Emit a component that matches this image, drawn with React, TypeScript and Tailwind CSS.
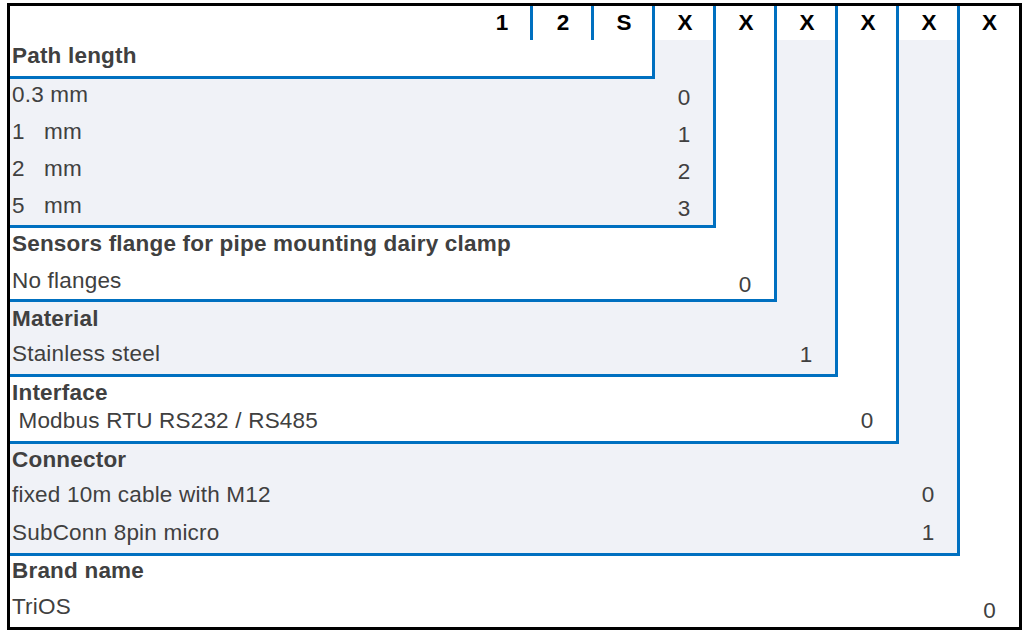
import React from "react";

const Row = ({
  label,
  value,
  h,
  lp,
  vp,
  lh,
  valueW = "w-[58px]",
}: {
  label: string;
  value: string;
  h: string;
  lp: string;
  vp: string;
  lh: string;
  valueW?: string;
}) => (
  <div className={`flex items-start ${h}`}>
    <div className={`flex-1 pl-[2px] whitespace-pre tracking-[0.2px] ${lp} ${lh}`}>{label}</div>
    <div className={`${valueW} text-center ${vp} ${lh}`}>{value}</div>
  </div>
);

const Head = ({ text, h, lh }: { text: string; h: string; lh: string }) => (
  <div className={`pl-[2px] font-bold whitespace-pre tracking-[0.2px] ${h} ${lh}`}>{text}</div>
);

export default function App() {
  const cols = ["1", "2", "S", "X", "X", "X", "X", "X"];
  return (
    <div className="w-[1024px] h-[637px] bg-white font-['Liberation_Sans',Arial,sans-serif] text-[22.5px] text-[#404040] pt-[3px] pl-[7px]">
      <div className="w-[1015px] h-[627px] border-[3px] border-black flex flex-col bg-white">
        {/* header */}
        <div className="flex h-[34px] text-black font-bold">
          <div className="flex-1" />
          {cols.map((c, i) => (
            <div
              key={i}
              className="w-[61px] border-r-[3px] border-[#0070c0] text-center leading-[34px] pl-[2px]"
            >
              {c}
            </div>
          ))}
          <div className="w-[59px] text-center leading-[34px]">X</div>
        </div>
        {/* Box5 Connector */}
        <div className="w-[950px] bg-[#f0f2f7] border-r-[3px] border-b-[3px] border-[#0070c0]">
          {/* Box4 Interface */}
          <div className="w-[889px] bg-white border-r-[3px] border-b-[3px] border-[#0070c0]">
            {/* Box3 Material */}
            <div className="w-[828px] bg-[#f0f2f7] border-r-[3px] border-b-[3px] border-[#0070c0]">
              {/* Box2 Sensors */}
              <div className="w-[767px] bg-white border-r-[3px] border-b-[3px] border-[#0070c0]">
                {/* Box1 Path length values */}
                <div className="w-[706px] bg-[#f0f2f7] border-r-[3px] border-b-[3px] border-[#0070c0]">
                  {/* Box0 heading */}
                  <div className="w-[645px] bg-white border-r-[3px] border-b-[3px] border-[#0070c0]">
                    <Head text="Path length" h="h-[36px]" lh="leading-[32px]" />
                  </div>
                  <Row label="0.3 mm" value="0" h="h-[37px]" lp="pt-0" vp="pt-[3px]" lh="leading-[32px]" />
                  <Row label="1   mm" value="1" h="h-[37px]" lp="pt-0" vp="pt-[3px]" lh="leading-[32px]" />
                  <Row label="2   mm" value="2" h="h-[37px]" lp="pt-0" vp="pt-[3px]" lh="leading-[32px]" />
                  <Row label="5   mm" value="3" h="h-[35px]" lp="pt-0" vp="pt-[3px]" lh="leading-[32px]" />
                </div>
                <Head text="Sensors flange for pipe mounting dairy clamp" h="h-[34px]" lh="leading-[32px]" />
                <Row label="No flanges" value="0" h="h-[37px]" lp="pt-[3px]" vp="pt-[7px]" lh="leading-[32px]" />
              </div>
              <Head text="Material" h="h-[34px]" lh="leading-[34px]" />
              <Row label="Stainless steel" value="1" h="h-[38px]" lp="pt-[2px]" vp="pt-[3px]" lh="leading-[32px]" />
            </div>
            <Head text="Interface" h="h-[32px]" lh="leading-[32px]" />
            <Row label=" Modbus RTU RS232 / RS485" value="0" h="h-[32px]" lp="pt-0" vp="pt-0" lh="leading-[24px]" />
          </div>
          <Head text="Connector" h="h-[32px]" lh="leading-[32px]" />
          <Row label="fixed 10m cable with M12" value="0" h="h-[38px]" lp="pt-0" vp="pt-0" lh="leading-[38px]" />
          <Row label="SubConn 8pin micro" value="1" h="h-[39px]" lp="pt-0" vp="pt-0" lh="leading-[38px]" />
        </div>
        <Head text="Brand name" h="h-[30px]" lh="leading-[30px]" />
        <Row label="TriOS" value="0" h="h-[41px]" lp="pt-[5px]" vp="pt-[9px]" lh="leading-[32px]" valueW="w-[59px]" />
      </div>
    </div>
  );
}
